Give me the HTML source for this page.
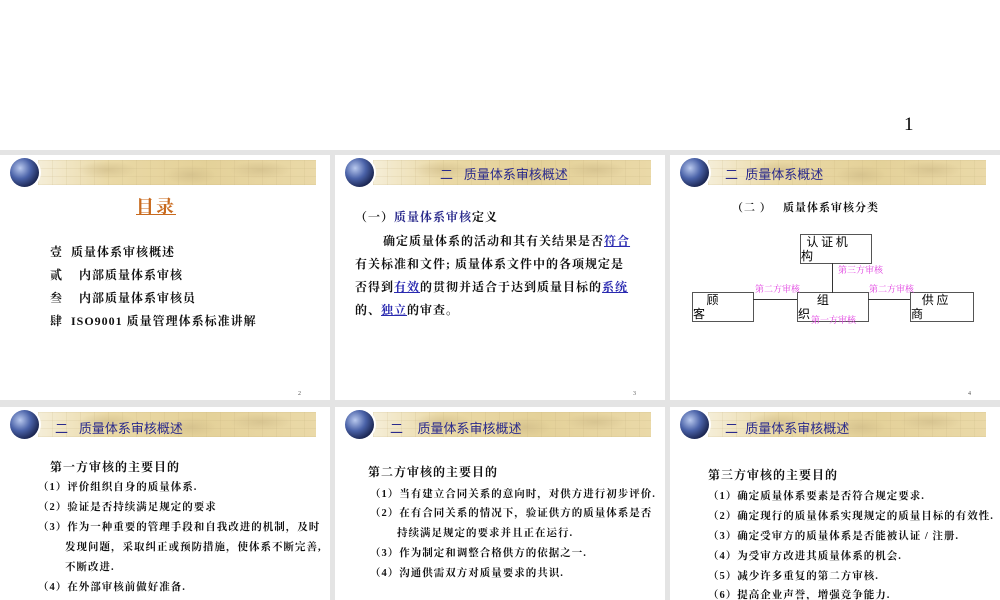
<!DOCTYPE html>
<html><head><meta charset="utf-8"><style>
body{margin:0;width:1000px;height:600px;overflow:hidden;background:#fff;font-family:"Liberation Serif","Noto Serif CJK SC","Noto Sans CJK SC",serif;position:relative}
.bg{position:absolute;left:0;top:150px;width:1000px;height:450px;background:#e4e4e4}
.s{position:absolute;background:#fff;overflow:hidden}
.bar{position:absolute;left:38px;top:5px;width:278px;height:25px;background:linear-gradient(90deg,#f5eed8,#ead9a6 25%,#e4d199 60%,#ead9a8);}
.bar:before{content:"";position:absolute;inset:0;background-image:linear-gradient(90deg,rgba(190,170,120,.15) 1px,transparent 1px),linear-gradient(rgba(190,170,120,.15) 1px,transparent 1px);background-size:14px 8px}
.bar:after{content:"";position:absolute;inset:0;background:radial-gradient(ellipse 30px 9px at 25% 40%,rgba(200,180,130,.5),transparent),radial-gradient(ellipse 25px 10px at 55% 60%,rgba(200,180,130,.5),transparent),radial-gradient(ellipse 30px 9px at 80% 40%,rgba(200,180,130,.5),transparent)}
.globe{position:absolute;left:10px;top:3px;width:29px;height:29px;border-radius:50%;background:radial-gradient(circle at 35% 35%,#b9c9ee,#4a62a8 40%,#1a2550 75%,#0a0f25);box-shadow:0 0 0 2px #fff;z-index:1}
.t{position:absolute;color:#2a2a8c;font-size:13px;white-space:pre;font-family:"Liberation Sans","Noto Sans CJK SC",sans-serif;z-index:1}
.x{position:absolute;white-space:pre;color:#111;font-size:12px;font-weight:bold;font-family:"Liberation Serif","Noto Serif CJK SC",serif;letter-spacing:1px}
.n{position:absolute;font-size:6px;color:#555}
a{color:#2a2ab0;text-decoration:underline}
.box{position:absolute;border:1px solid #555;background:#fff;font-size:12px;font-family:"Noto Sans CJK SC",sans-serif}
.m{position:absolute;color:#e040e0;font-size:9px;white-space:pre;font-family:"Noto Serif CJK SC",serif}
</style></head><body>
<div style="position:absolute;left:904px;top:114px;font-size:19px;font-family:'Liberation Serif',serif">1</div>
<div class="bg"></div>

<div class="s" style="left:0;top:155px;width:330px;height:245px">
<div class="bar"></div><div class="globe"></div>
<div class="x" style="left:136px;top:38px;font-size:18px;color:#c86a1e;text-decoration:underline;letter-spacing:2px">目录</div>
<div class="x" style="left:50px;top:88px">壹  质量体系审核概述</div>
<div class="x" style="left:50px;top:111px">贰    内部质量体系审核</div>
<div class="x" style="left:50px;top:134px">叁    内部质量体系审核员</div>
<div class="x" style="left:50px;top:157px">肆  ISO9001 质量管理体系标准讲解</div>
<div class="n" style="left:298px;top:236px">2</div>
</div>

<div class="s" style="left:335px;top:155px;width:330px;height:245px">
<div class="bar"></div><div class="globe"></div>
<div class="t" style="left:105px;top:9px">二   质量体系审核概述</div>
<div class="x" style="left:20px;top:53px">（一）<span style="color:#2a2a8c">质量体系审核</span>定义</div>
<div class="x" style="left:48px;top:77px">确定质量体系的活动和其有关结果是否<a>符合</a></div>
<div class="x" style="left:20px;top:100px">有关标准和文件; 质量体系文件中的各项规定是</div>
<div class="x" style="left:20px;top:123px">否得到<a>有效</a>的贯彻并适合于达到质量目标的<a>系统</a></div>
<div class="x" style="left:20px;top:146px">的、<a>独立</a>的审查。</div>
<div class="n" style="left:298px;top:236px">3</div>
</div>

<div class="s" style="left:670px;top:155px;width:330px;height:245px">
<div class="bar"></div><div class="globe"></div>
<div class="t" style="left:55px;top:9px">二  质量体系概述</div>
<div class="x" style="left:62px;top:44px;font-size:11px">（二 ）   质量体系审核分类</div>
<div class="box" style="left:130px;top:79px;width:70px;height:28px;line-height:14px">&nbsp;&nbsp;认 证 机<br>构</div>
<div class="box" style="left:22px;top:137px;width:60px;height:28px;line-height:14px">&nbsp;&nbsp;&nbsp;&nbsp;&nbsp;顾<br>客</div>
<div class="box" style="left:127px;top:137px;width:70px;height:28px;line-height:14px">&nbsp;&nbsp;&nbsp;&nbsp;&nbsp;&nbsp;&nbsp;组<br>织</div>
<div class="box" style="left:240px;top:137px;width:62px;height:28px;line-height:14px">&nbsp;&nbsp;&nbsp;&nbsp;供 应<br>商</div>
<div style="position:absolute;left:162px;top:108px;width:1px;height:30px;background:#333"></div>
<div style="position:absolute;left:83px;top:144px;width:44px;height:1px;background:#333"></div>
<div style="position:absolute;left:198px;top:144px;width:42px;height:1px;background:#333"></div>
<div class="m" style="left:168px;top:108px">第三方审核</div>
<div class="m" style="left:85px;top:127px">第二方审核</div>
<div class="m" style="left:199px;top:127px">第二方审核</div>
<div class="m" style="left:141px;top:158px">第一方审核</div>
<div class="n" style="left:298px;top:236px">4</div>
</div>

<div class="s" style="left:0;top:407px;width:330px;height:193px">
<div class="bar"></div><div class="globe"></div>
<div class="t" style="left:55px;top:11px">二   质量体系审核概述</div>
<div class="x" style="left:50px;top:51px">第一方审核的主要目的</div>
<div class="x" style="left:38px;top:72px;font-size:10.5px">（1）评价组织自身的质量体系.</div>
<div class="x" style="left:38px;top:92px;font-size:10.5px">（2）验证是否持续满足规定的要求</div>
<div class="x" style="left:38px;top:112px;font-size:10.5px">（3）作为一种重要的管理手段和自我改进的机制，及时</div>
<div class="x" style="left:65px;top:132px;font-size:10.5px">发现问题，采取纠正或预防措施，使体系不断完善,</div>
<div class="x" style="left:65px;top:152px;font-size:10.5px">不断改进.</div>
<div class="x" style="left:38px;top:172px;font-size:10.5px">（4）在外部审核前做好准备.</div>
</div>

<div class="s" style="left:335px;top:407px;width:330px;height:193px">
<div class="bar"></div><div class="globe"></div>
<div class="t" style="left:55px;top:11px">二    质量体系审核概述</div>
<div class="x" style="left:33px;top:56px">第二方审核的主要目的</div>
<div class="x" style="left:35px;top:79px;font-size:10.5px">（1）当有建立合同关系的意向时，对供方进行初步评价.</div>
<div class="x" style="left:35px;top:98px;font-size:10.5px">（2）在有合同关系的情况下，验证供方的质量体系是否</div>
<div class="x" style="left:62px;top:118px;font-size:10.5px">持续满足规定的要求并且正在运行.</div>
<div class="x" style="left:35px;top:138px;font-size:10.5px">（3）作为制定和调整合格供方的依据之一.</div>
<div class="x" style="left:35px;top:158px;font-size:10.5px">（4）沟通供需双方对质量要求的共识.</div>
</div>

<div class="s" style="left:670px;top:407px;width:330px;height:193px">
<div class="bar"></div><div class="globe"></div>
<div class="t" style="left:55px;top:11px">二  质量体系审核概述</div>
<div class="x" style="left:38px;top:59px">第三方审核的主要目的</div>
<div class="x" style="left:38px;top:81px;font-size:10.5px">（1）确定质量体系要素是否符合规定要求.</div>
<div class="x" style="left:38px;top:101px;font-size:10.5px">（2）确定现行的质量体系实现规定的质量目标的有效性.</div>
<div class="x" style="left:38px;top:121px;font-size:10.5px">（3）确定受审方的质量体系是否能被认证 / 注册.</div>
<div class="x" style="left:38px;top:141px;font-size:10.5px">（4）为受审方改进其质量体系的机会.</div>
<div class="x" style="left:38px;top:161px;font-size:10.5px">（5）减少许多重复的第二方审核.</div>
<div class="x" style="left:38px;top:180px;font-size:10.5px">（6）提高企业声誉，增强竞争能力.</div>
</div>
</body></html>
